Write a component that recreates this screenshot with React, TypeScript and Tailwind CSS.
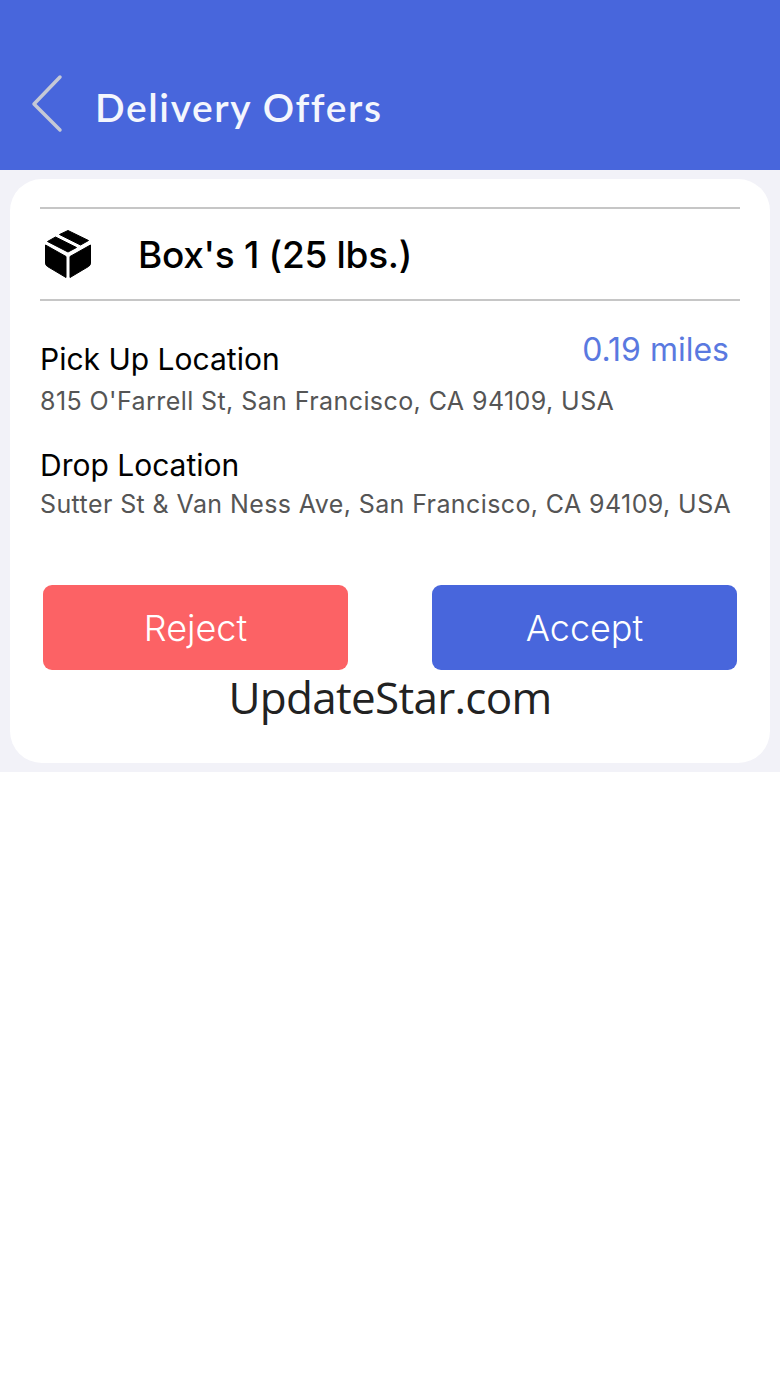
export default function App() {
  return (
    <div className="min-h-[1387px] bg-white font-['Inter',sans-serif]">
      {/* Header */}
      <div className="h-[170px] bg-[#4866dc] flex items-end pb-[40px] pl-[30px]">
        <svg width="34" height="60" viewBox="0 0 34 60" fill="none" className="mb-[-4px]">
          <path d="M30 3 L4 30 L30 56" stroke="#c5c9d6" strokeWidth="3.500" strokeLinecap="round" strokeLinejoin="round" />
        </svg>
        <h1 className="ml-[31px] text-[39px] leading-[46px] font-semibold tracking-[1.6px] text-[#f4f6fd] font-['Lato',sans-serif]">
          Delivery Offers
        </h1>
      </div>

      {/* Offer */}
      <div className="bg-[#f2f2f8] pt-[9px] pb-[9px] px-[10px]">
        <div className="h-[584px] bg-white rounded-[32px] px-[30px] pt-[28px]">
          <div className="h-[94px] border-y-2 border-[#c6c6c6] flex items-center">
            <svg width="50" height="50" viewBox="0 0 50 50" className="ml-[3px] shrink-0">
              <g fill="#000" stroke="#000" strokeWidth="1" strokeLinejoin="round">
                <path d="M25 1.500 L45.500 11.500 L37.500 16 L16.500 5.500 Z" />
                <path d="M12.500 8 L33.500 18.500 L25 23 L4.500 12.500 Z" />
                <path d="M2.500 16 L23 27.500 L23 48.500 L4.500 37.500 Q2.500 36.500 2.500 34 Z" />
                <path d="M47.500 16 L27 27.500 L27 48.500 L45.500 37.500 Q47.500 36.500 47.500 34 Z" />
              </g>
            </svg>
            <span className="ml-[45px] text-[37px] leading-none font-medium tracking-[-0.3px] text-black">Box's 1 (25 lbs.)</span>
          </div>

          <div className="relative pt-[40px]">
            <span className="absolute right-[11px] top-[30px] text-[32px] leading-[38px] text-[#5a79e0]">0.19 miles</span>
            <p className="text-[30px] leading-[36px] text-black">Pick Up Location</p>
            <p className="mt-[8px] text-[25px] leading-[32px] tracking-[0.42px] text-[#555555]">815 O'Farrell St, San Francisco, CA 94109, USA</p>
            <p className="mt-[30px] text-[30px] leading-[36px] text-black">Drop Location</p>
            <p className="mt-[5px] text-[25px] leading-[32px] tracking-[0.4px] text-[#555555] whitespace-nowrap">Sutter St &amp; Van Ness Ave, San Francisco, CA 94109, USA</p>
          </div>

          <div className="mt-[65px] flex justify-between px-[3px]">
            <button className="w-[305px] h-[85px] rounded-[9px] bg-[#fc6265] text-white text-[36px] font-light">Reject</button>
            <button className="w-[305px] h-[85px] rounded-[9px] bg-[#4866dc] text-white text-[36px] font-light">Accept</button>
          </div>
          <p className="text-center text-[44px] leading-[54px] tracking-[-0.7px] text-[#222222] font-['Open_Sans',sans-serif]">UpdateStar.com</p>
        </div>
      </div>
    </div>
  );
}
